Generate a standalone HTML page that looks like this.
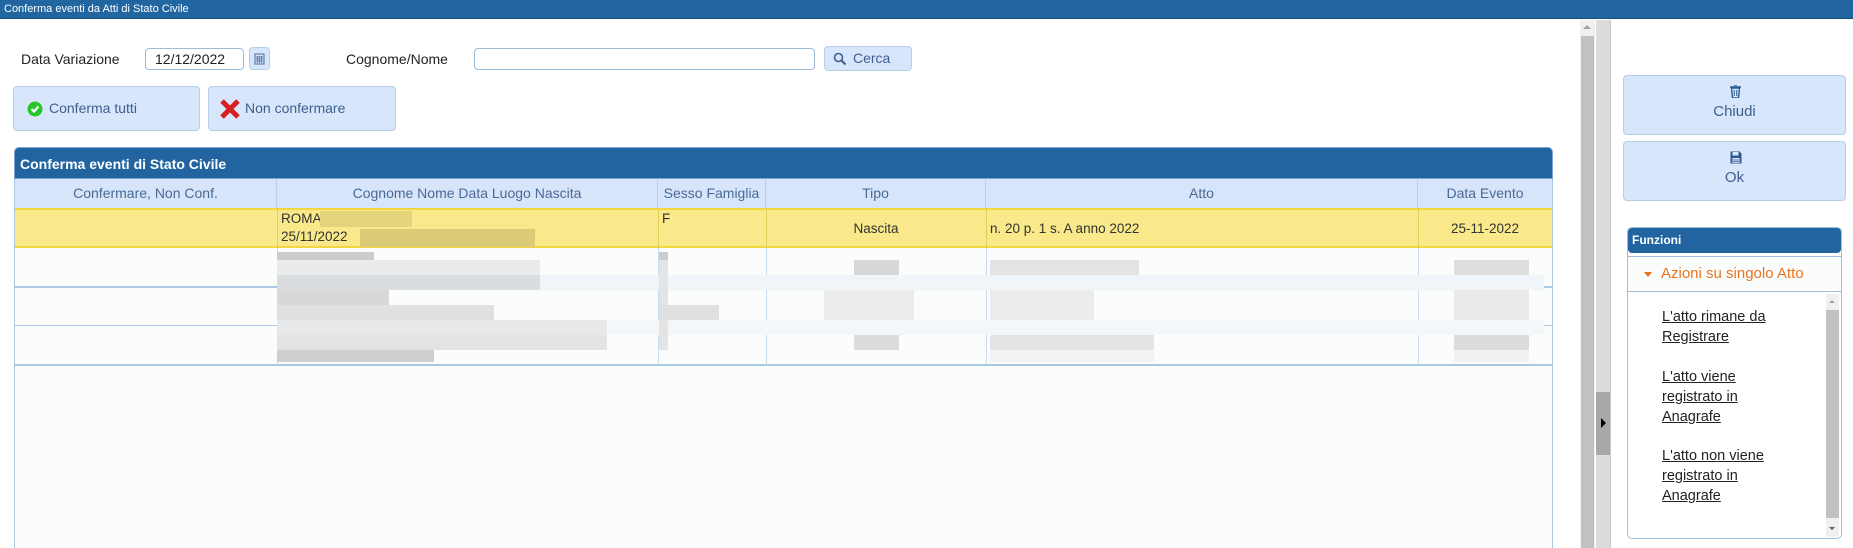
<!DOCTYPE html>
<html><head><meta charset="utf-8">
<style>
*{box-sizing:border-box;margin:0;padding:0}
body{width:1853px;height:548px;overflow:hidden;background:#fff;font-family:"Liberation Sans",sans-serif;position:relative;color:#333}
.a{position:absolute}
.title{left:0;top:0;width:1853px;height:19px;background:#2166a1;border-bottom:1px solid #1a4e7c;color:#fff;font-size:11px;line-height:18px;padding-left:4px}
.lbl{font-size:14px;color:#222}
.inp{border:1px solid #9cbbd9;border-radius:4px;background:#fff;height:22px}
.btn{background:#d8e6fc;border:1px solid #b8cde6;border-radius:4px;color:#3d5f8e;font-size:14px}
.gh{left:14px;top:147px;width:1539px;height:32px;background:#2264a0;border-radius:5px 5px 0 0;color:#fff;font-weight:bold;font-size:14px;line-height:32px;padding-left:5px;border:1px solid #7aa7d3}
.ch{top:179px;height:29px;background:#d7e5fb;color:#4a6a94;font-size:14px;line-height:28px;text-align:center;border-right:1px solid #b8d0ea}
.cell{font-size:13.5px;color:#333}
.g{position:absolute}
.lk{left:1662px;font-size:14.5px;color:#222;text-decoration:underline;line-height:20px}
</style></head><body>
<div class="a title">Conferma eventi da Atti di Stato Civile</div>

<div class="a lbl" style="left:21px;top:51px">Data Variazione</div>
<div class="a inp" style="left:145px;top:48px;width:99px;font-size:14px;line-height:20px;padding-left:9px;color:#222">12/12/2022</div>
<div class="a btn" style="left:249px;top:47px;width:21px;height:23px">
<svg width="19" height="21" viewBox="0 0 19 21"><rect x="5" y="6" width="9" height="10" fill="none" stroke="#4a6a94"/><path d="M6 9h7M6 11h7M6 13h7M7.5 8v7M9.5 8v7M11.5 8v7" stroke="#4a6a94" stroke-width="0.7"/></svg></div>
<div class="a lbl" style="left:346px;top:51px">Cognome/Nome</div>
<div class="a inp" style="left:474px;top:48px;width:341px"></div>
<div class="a btn" style="left:824px;top:46px;width:88px;height:25px;line-height:23px;padding-left:28px">Cerca
<svg class="a" style="left:8px;top:5px" width="14" height="14" viewBox="0 0 14 14"><circle cx="5.5" cy="5.5" r="4" fill="none" stroke="#3d5f8e" stroke-width="1.6"/><path d="M8.5 8.5l4 4" stroke="#3d5f8e" stroke-width="2"/></svg></div>

<div class="a btn" style="left:13px;top:86px;width:187px;height:45px;line-height:43px;padding-left:35px">Conferma tutti
<svg class="a" style="left:13px;top:14px" width="16" height="16" viewBox="0 0 16 16"><circle cx="8" cy="8" r="7.5" fill="#29c629"/><path d="M4.5 8l2.5 2.5 4.5-5" stroke="#fff" stroke-width="2.2" fill="none"/></svg></div>
<div class="a btn" style="left:208px;top:86px;width:188px;height:45px;line-height:43px;padding-left:36px">Non confermare
<svg class="a" style="left:10px;top:11px" width="22" height="22" viewBox="0 0 22 22"><path d="M3 3L19 19M19 3L3 19" stroke="#d42020" stroke-width="5"/></svg></div>

<!-- grid -->
<div class="a gh">Conferma eventi di Stato Civile</div>
<div class="a" style="left:14px;top:179px;width:1539px;height:369px;background:#fbfdfd;border-left:1px solid #a8c8e4;border-right:1px solid #a8c8e4"></div>
<div class="a ch" style="left:15px;width:262px">Confermare, Non Conf.</div>
<div class="a ch" style="left:277px;width:381px">Cognome Nome Data Luogo Nascita</div>
<div class="a ch" style="left:658px;width:108px">Sesso Famiglia</div>
<div class="a ch" style="left:766px;width:220px">Tipo</div>
<div class="a ch" style="left:986px;width:432px">Atto</div>
<div class="a ch" style="left:1418px;width:134px;border-right:none">Data Evento</div>

<div class="a" style="left:15px;top:208px;width:1537px;height:40px;background:#f9e98a;border-top:2px solid #f2d640;border-bottom:2px solid #f2d640"></div>
<div class="a" style="left:277px;top:208px;width:1px;height:40px;background:#e3cc55"></div>
<div class="a" style="left:658px;top:208px;width:1px;height:40px;background:#e3cc55"></div>
<div class="a" style="left:766px;top:208px;width:1px;height:40px;background:#e3cc55"></div>
<div class="a" style="left:986px;top:208px;width:1px;height:40px;background:#e3cc55"></div>
<div class="a" style="left:1418px;top:208px;width:1px;height:40px;background:#e3cc55"></div>
<div class="a cell" style="left:281px;top:211px">ROMA</div>
<div class="a" style="left:320px;top:211px;width:92px;height:16px;background:#e3d47c"></div>
<div class="a cell" style="left:281px;top:229px">25/11/2022</div>
<div class="a" style="left:360px;top:229px;width:175px;height:18px;background:#dccb76"></div>
<div class="a cell" style="left:662px;top:211px">F</div>
<div class="a cell" style="left:766px;top:221px;width:220px;text-align:center">Nascita</div>
<div class="a cell" style="left:990px;top:221px">n. 20 p. 1 s. A anno 2022</div>
<div class="a cell" style="left:1418px;top:221px;width:134px;text-align:center">25-11-2022</div>

<!-- row lines -->
<div class="a" style="left:15px;top:286px;width:262px;height:2px;background:#a8c8e4"></div>
<div class="a" style="left:15px;top:325px;width:262px;height:1px;background:#a8c8e4"></div>
<div class="a" style="left:1544px;top:286px;width:9px;height:2px;background:#a8c8e4"></div>
<div class="a" style="left:1544px;top:325px;width:9px;height:1px;background:#a8c8e4"></div>
<div class="a" style="left:15px;top:364px;width:1537px;height:2px;background:#a8c8e4"></div>
<div class="a" style="left:277px;top:248px;width:1px;height:117px;background:#c8dcf0"></div>
<div class="a" style="left:658px;top:248px;width:1px;height:117px;background:#c8dcf0"></div>
<div class="a" style="left:766px;top:248px;width:1px;height:117px;background:#c8dcf0"></div>
<div class="a" style="left:986px;top:248px;width:1px;height:117px;background:#c8dcf0"></div>
<div class="a" style="left:1418px;top:248px;width:1px;height:117px;background:#c8dcf0"></div>

<!-- blurred -->
<div class="g" style="left:277px;top:275px;width:1267px;height:15px;background:#f0f5f9"></div>
<div class="g" style="left:277px;top:320px;width:1267px;height:15px;background:#f4f7fa"></div>
<div class="g" style="left:277px;top:252px;width:97px;height:8px;background:#ccc"></div>
<div class="g" style="left:277px;top:260px;width:263px;height:15px;background:#ebebeb"></div>
<div class="g" style="left:277px;top:275px;width:263px;height:15px;background:#dadde0"></div>
<div class="g" style="left:277px;top:290px;width:112px;height:15px;background:#d8d8d8"></div>
<div class="g" style="left:277px;top:305px;width:217px;height:15px;background:#e0e0e0"></div>
<div class="g" style="left:277px;top:320px;width:330px;height:15px;background:#e6e8ea"></div>
<div class="g" style="left:277px;top:335px;width:330px;height:15px;background:#e3e3e3"></div>
<div class="g" style="left:277px;top:350px;width:157px;height:12px;background:#cfcfcf"></div>
<div class="g" style="left:659px;top:252px;width:9px;height:8px;background:#ccc"></div>
<div class="g" style="left:659px;top:260px;width:9px;height:90px;background:#e4e4e4"></div>
<div class="g" style="left:659px;top:305px;width:60px;height:15px;background:#e0e0e0"></div>
<div class="g" style="left:854px;top:260px;width:45px;height:15px;background:#d6d7d9"></div>
<div class="g" style="left:824px;top:290px;width:90px;height:30px;background:#ececec"></div>
<div class="g" style="left:854px;top:335px;width:45px;height:15px;background:#dcdcdc"></div>
<div class="g" style="left:990px;top:260px;width:149px;height:15px;background:#e3e3e3"></div>
<div class="g" style="left:990px;top:290px;width:104px;height:30px;background:#ececec"></div>
<div class="g" style="left:990px;top:335px;width:164px;height:15px;background:#e4e4e4"></div>
<div class="g" style="left:990px;top:350px;width:164px;height:12px;background:#f3f3f3"></div>
<div class="g" style="left:1454px;top:260px;width:75px;height:15px;background:#dedede"></div>
<div class="g" style="left:1454px;top:290px;width:75px;height:30px;background:#ebebeb"></div>
<div class="g" style="left:1454px;top:335px;width:75px;height:15px;background:#dcdcdc"></div>
<div class="g" style="left:1454px;top:350px;width:75px;height:12px;background:#f1f1f1"></div>

<!-- scrollbars / splitter -->
<div class="a" style="left:1580px;top:20px;width:15px;height:528px;background:#f0f0f0"></div>
<div class="a" style="left:1581px;top:36px;width:13px;height:512px;background:#c1c1c1"></div>
<div class="a" style="left:1583px;top:25px;width:0;height:0;border-left:4px solid transparent;border-right:4px solid transparent;border-bottom:4px solid #a0a0a0"></div>
<div class="a" style="left:1596px;top:20px;width:15px;height:528px;background:#dcdcdc;border-right:1px solid #c8c8c8"></div>
<div class="a" style="left:1596px;top:392px;width:14px;height:63px;background:#a8a8a8"></div>
<div class="a" style="left:1601px;top:418px;width:0;height:0;border-top:5px solid transparent;border-bottom:5px solid transparent;border-left:5px solid #000"></div>

<!-- right panel -->
<div class="a btn" style="left:1623px;top:75px;width:223px;height:60px;text-align:center;padding-top:27px;font-size:15px">Chiudi
<svg class="a" style="left:106px;top:9px" width="11" height="13" viewBox="0 0 11 13"><path d="M0 2h11M4 0h3M1.5 3l1 10h6l1-10z" stroke="#2e5a8e" stroke-width="1.4" fill="none"/><path d="M4.3 5v6M6.7 5v6" stroke="#2e5a8e"/></svg></div>
<div class="a btn" style="left:1623px;top:141px;width:223px;height:60px;text-align:center;padding-top:27px;font-size:15px">Ok
<svg class="a" style="left:106px;top:9px" width="12" height="13" viewBox="0 0 12 13"><path d="M0.5 0.5h9l2 2v10h-11z" fill="#2e5a8e"/><rect x="2.5" y="1" width="6" height="3.5" fill="#d8e6fc"/><rect x="2.5" y="7" width="7" height="5" fill="#d8e6fc"/><path d="M3 9h6M3 10.8h6" stroke="#2e5a8e" stroke-width="0.8"/></svg></div>

<div class="a" style="left:1627px;top:227px;width:215px;height:312px;border:1px solid #9cc0e0;border-radius:5px;background:#fff"></div>
<div class="a" style="left:1628px;top:228px;width:213px;height:25px;background:#2264a0;border-radius:4px;color:#fff;font-weight:bold;font-size:12px;line-height:25px;padding-left:4px">Funzioni</div>
<div class="a" style="left:1628px;top:256px;width:213px;height:36px;background:#fbfdfd;border-bottom:1px solid #9cc0e0;border-top:1px solid #9cc0e0;color:#e8741c;font-size:15px;line-height:34px;padding-left:33px">Azioni su singolo Atto</div>
<div class="a" style="left:1644px;top:272px;width:0;height:0;border-left:4px solid transparent;border-right:4px solid transparent;border-top:5px solid #e8741c"></div>
<div class="a" style="left:1826px;top:294px;width:13px;height:243px;background:#f0f0f0"></div>
<div class="a" style="left:1826px;top:310px;width:13px;height:208px;background:#c1c1c1"></div>
<div class="a" style="left:1829px;top:300px;width:0;height:0;border-left:3px solid transparent;border-right:3px solid transparent;border-bottom:3px solid #a0a0a0"></div>
<div class="a" style="left:1829px;top:527px;width:0;height:0;border-left:3px solid transparent;border-right:3px solid transparent;border-top:3px solid #606060"></div>
<div class="a lk" style="top:307px">L'atto rimane da<br>Registrare</div>
<div class="a lk" style="top:367px">L'atto viene<br>registrato in<br>Anagrafe</div>
<div class="a lk" style="top:446px">L'atto non viene<br>registrato in<br>Anagrafe</div>
</body></html>
